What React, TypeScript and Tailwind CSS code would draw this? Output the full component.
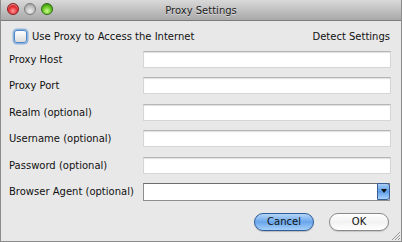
import React from "react";

const font = { fontFamily: '"DejaVu Sans", "Lucida Grande", sans-serif' };

function Field() {
  return (
    <div className="h-[17px] w-[248px] bg-white border border-[#d6d6d6] border-t-[#b4b4b4] shadow-[inset_0_1px_1px_rgba(0,0,0,0.12)]" />
  );
}

const labels = [
  "Proxy Host",
  "Proxy Port",
  "Realm (optional)",
  "Username (optional)",
  "Password (optional)",
];

export default function App() {
  return (
    <div
      className="w-[402px] h-[242px] bg-[#e8e8e8] text-[10px] text-[#111] flex flex-col border-x border-b border-[#8c8c8c] relative overflow-hidden"
      style={font}
    >
      {/* title bar */}
      <div className="h-[21px] shrink-0 relative flex items-center justify-center bg-gradient-to-b from-[#d9d9d9] to-[#a9a9a9] border-b border-[#7c7c7c]">
        <div className="absolute left-[6px] top-[3px] flex gap-[5px]">
          <div className="w-[12px] h-[12px] rounded-full border border-[#8a1c1c] bg-[radial-gradient(circle_at_50%_70%,#ff9a9a,#e0252a_55%,#a41015)] shadow-[inset_0_1px_1px_rgba(255,255,255,0.6)]" />
          <div className="w-[12px] h-[12px] rounded-full border border-[#7a7a7a] bg-[radial-gradient(circle_at_50%_70%,#eeeeee,#bdbdbd_55%,#8e8e8e)]" />
          <div className="w-[12px] h-[12px] rounded-full border border-[#2f6a12] bg-[radial-gradient(circle_at_50%_70%,#c9ff8a,#5fbf1e_55%,#2f7d0c)]" />
        </div>
        <span className="text-[#222] [text-shadow:0_1px_0_rgba(255,255,255,0.5)] text-[10px]">
          Proxy Settings
        </span>
      </div>

      {/* checkbox row */}
      <div className="flex items-center justify-between pl-[13px] pr-[11px] mt-[8px] h-[14px]">
        <div className="flex items-center gap-[5px]">
          <div className="w-[13px] h-[13px] rounded-[3px] border border-[#4f86c6] bg-gradient-to-b from-[#ffffff] to-[#dcdcdc] shadow-[0_0_0_1.5px_rgba(110,160,220,0.75)]" />
          <span>Use Proxy to Access the Internet</span>
        </div>
        <span>Detect Settings</span>
      </div>

      {/* fields */}
      <div className="flex flex-col gap-[9.4px] mt-[8px] pl-[8px]">
        {labels.map((l) => (
          <div key={l} className="flex items-center h-[17px]">
            <span className="w-[134px]">{l}</span>
            <Field />
          </div>
        ))}
        <div className="flex items-center h-[18px]">
          <span className="w-[134px]">Browser Agent (optional)</span>
          <div className="h-[18px] w-[247px] bg-white border border-[#8e8e8e] border-t-[#6e6e6e] flex justify-end">
            <div className="w-[13px] h-[17px] -mt-[1px] -mr-[1px] rounded-r-[3px] border border-[#3a5f94] bg-gradient-to-b from-[#a9cdf5] via-[#5d9be6] to-[#a9d2fb] flex items-center justify-center">
              <svg width="6" height="4" viewBox="0 0 6 4">
                <path d="M0 0H6L3 4Z" fill="#111" />
              </svg>
            </div>
          </div>
        </div>
      </div>

      {/* buttons */}
      <div className="flex justify-end gap-[15px] pr-[12px] mt-[12px]">
        <button className="w-[60px] h-[18px] rounded-full border border-[#2f5d9c] bg-gradient-to-b from-[#b6d6f7] via-[#6aa6eb] to-[#a6d0fa] text-[#111] text-[10px] flex items-center justify-center shadow-[0_1px_1px_rgba(0,0,0,0.2)]" style={font}>
          Cancel
        </button>
        <button className="w-[60px] h-[18px] rounded-full border border-[#8a8a8a] bg-gradient-to-b from-[#ffffff] via-[#f2f2f2] to-[#ffffff] text-[#111] text-[10px] flex items-center justify-center shadow-[0_1px_1px_rgba(0,0,0,0.15)]" style={font}>
          OK
        </button>
      </div>

      {/* resize grip */}
      <svg className="absolute right-[1px] bottom-[1px]" width="9" height="9" viewBox="0 0 9 9">
        <path d="M1 9L9 1M4 9L9 4M7 9L9 7" stroke="#9a9a9a" strokeWidth="1" />
      </svg>
    </div>
  );
}
